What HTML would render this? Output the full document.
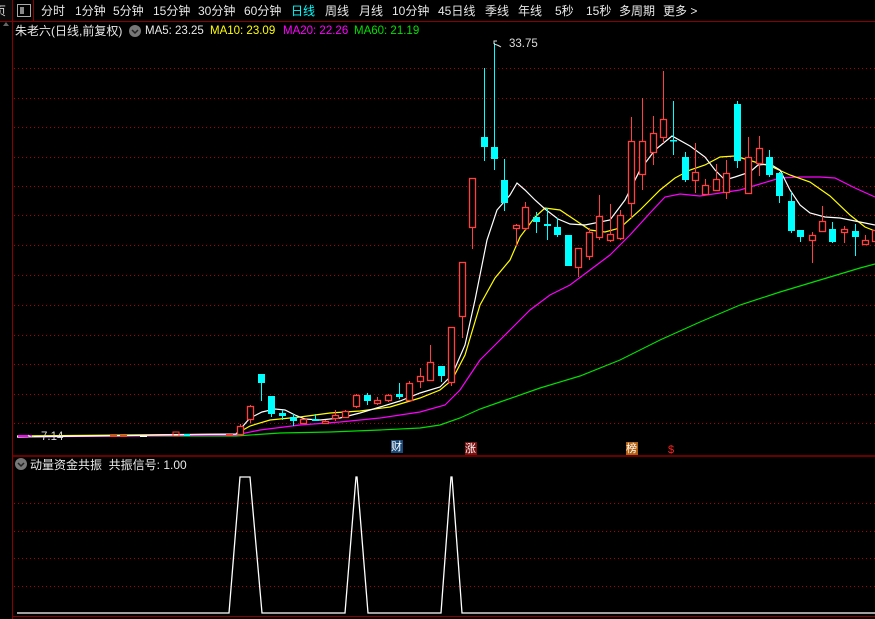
<!DOCTYPE html>
<html><head><meta charset="utf-8"><style>
html,body{margin:0;padding:0;background:#000;width:875px;height:619px;overflow:hidden}
body{position:relative;font-family:"Liberation Sans","Noto Sans CJK SC",sans-serif;font-size:12px;color:#e8e8e8}
.t{position:absolute;white-space:nowrap;line-height:14px}
svg{position:absolute;left:0;top:0}
</style></head><body>
<svg width="875" height="619" viewBox="0 0 875 619">
<rect x="0" y="0" width="12" height="21" fill="#0a0a0a"/>
<line x1="0" y1="21.5" x2="875" y2="21.5" stroke="#8a0000" stroke-width="1"/>
<line x1="12.5" y1="0" x2="12.5" y2="619" stroke="#8a0000" stroke-width="1"/>
<line x1="33.5" y1="0" x2="33.5" y2="21" stroke="#8a0000" stroke-width="1"/>
<line x1="12" y1="456" x2="875" y2="456" stroke="#8a0000" stroke-width="1.5"/>
<line x1="12" y1="616.5" x2="875" y2="616.5" stroke="#8a0000" stroke-width="1"/>
<g stroke="#b00000" stroke-width="1" stroke-dasharray="1,3">
<line x1="14" y1="68.5" x2="875" y2="68.5"/><line x1="14" y1="98.5" x2="875" y2="98.5"/>
<line x1="14" y1="127.5" x2="875" y2="127.5"/><line x1="14" y1="157.5" x2="875" y2="157.5"/>
<line x1="14" y1="186.5" x2="875" y2="186.5"/><line x1="14" y1="215.5" x2="875" y2="215.5"/>
<line x1="14" y1="245.5" x2="875" y2="245.5"/><line x1="14" y1="275.5" x2="875" y2="275.5"/>
<line x1="14" y1="305.5" x2="875" y2="305.5"/><line x1="14" y1="335.5" x2="875" y2="335.5"/>
<line x1="14" y1="364.5" x2="875" y2="364.5"/><line x1="14" y1="394.5" x2="875" y2="394.5"/>
<line x1="14" y1="423.5" x2="875" y2="423.5"/>
<line x1="14" y1="503.5" x2="875" y2="503.5"/><line x1="14" y1="531.5" x2="875" y2="531.5"/>
<line x1="14" y1="558.5" x2="875" y2="558.5"/><line x1="14" y1="586.5" x2="875" y2="586.5"/>
</g>
<polyline fill="none" stroke="#00e000" stroke-width="1.2" points="17,436 236,436 280,433 330,432 380,430 420,428 440,425 460,418 480,409 500,402 540,388 580,376 620,360 660,340 700,322 740,305 780,292 820,280 860,268 875,264"/>
<polyline fill="none" stroke="#ff00ff" stroke-width="1.2" points="17,437 236,435 260,430 300,425 340,422 380,418 420,412 445,405 460,390 470,375 480,360 495,345 510,330 530,310 550,295 570,285 590,270 610,255 630,235 650,213 665,197 680,194 700,196 720,193 740,190 760,184 780,178 800,177 820,177 835,178 855,188 875,197"/>
<polyline fill="none" stroke="#ffff00" stroke-width="1.2" points="17,436 236,434 250,426 270,420 300,417 330,413 360,411 390,407 420,398 440,390 452,380 465,355 480,305 495,278 510,260 520,237 535,217 545,208 560,210 575,220 590,230 605,232 620,228 640,210 660,190 675,178 690,170 705,165 720,157 735,156 755,162 770,166 790,175 810,182 830,196 850,215 865,227 875,231"/>
<polyline fill="none" stroke="#ffffff" stroke-width="1.2" points="17,437 236,434 250,418 262,412 275,409 285,410 295,415 305,419 320,420 340,418 360,413 380,407 400,401 420,393 440,387 452,375 465,345 475,300 487,240 497,210 510,195 517,183 525,190 535,200 545,209 558,219 570,224 585,225 610,220 625,200 640,170 655,150 672,136 690,146 705,157 715,170 725,180 735,177 750,172 758,165 770,164 780,170 790,190 800,205 810,213 825,217 840,218 860,222 875,225"/>
<g id="c"></g>
<g stroke-width="1">
<rect x="18" y="435" width="14" height="2" fill="#ff00ff"/>
<rect x="110" y="435" width="7" height="2" fill="#ff3a3a"/><rect x="120" y="435" width="7" height="2" fill="#ff3a3a"/>
<rect x="140" y="436" width="7" height="1" fill="#fff"/>
<rect x="173" y="432" width="6" height="4" fill="none" stroke="#ff3a3a"/>
<rect x="184" y="434" width="6" height="2" fill="#00ffff"/>
<rect x="226" y="434" width="7" height="2" fill="#ff3a3a"/>
</g>
<path d="M31 437 l-3 -2 M28 437 h6" stroke="#ddd" fill="none"/>
<path d="M494 44 l0 -3 l3 0 M494 44 q4 1 7 3" stroke="#ddd" fill="none"/>
<rect x="391" y="440" width="12" height="13" fill="#1a4a7a"/>
<rect x="465" y="442" width="12" height="13" fill="#7a1010"/>
<rect x="626" y="442" width="12" height="13" fill="#b06010"/>
<polyline fill="none" stroke="#fff" stroke-width="1.3" points="17,613 229,613 240,477 250,477 262,613 345,613 356,477 357,477 368,613 441,613 451,477 452,477 462,613 875,613"/>
<circle cx="21" cy="464" r="6" fill="#777"/><path d="M18 463 l3 3 l3 -3" stroke="#222" stroke-width="1.5" fill="none"/>
<circle cx="135" cy="31" r="6" fill="#777"/><path d="M132 30 l3 3 l3 -3" stroke="#222" stroke-width="1.5" fill="none"/>
<rect x="17.5" y="4.5" width="13" height="12" fill="none" stroke="#aaa"/><rect x="20" y="7" width="4" height="7" fill="#888"/>
<path d="M3 26 l3 -4 l3 4z" fill="#666"/>
</svg>
<div class="t" style="color:#ddd;left:-6px;top:4px">页</div>
<div class="t" style="top:4px;left:41px">分时</div>
<div class="t" style="top:4px;left:75px">1分钟</div>
<div class="t" style="top:4px;left:113px">5分钟</div>
<div class="t" style="top:4px;left:153px">15分钟</div>
<div class="t" style="top:4px;left:198px">30分钟</div>
<div class="t" style="top:4px;left:244px">60分钟</div>
<div class="t" style="top:4px;left:291px;color:#00ffff">日线</div>
<div class="t" style="top:4px;left:325px">周线</div>
<div class="t" style="top:4px;left:359px">月线</div>
<div class="t" style="top:4px;left:392px">10分钟</div>
<div class="t" style="top:4px;left:438px">45日线</div>
<div class="t" style="top:4px;left:485px">季线</div>
<div class="t" style="top:4px;left:518px">年线</div>
<div class="t" style="top:4px;left:555px">5秒</div>
<div class="t" style="top:4px;left:586px">15秒</div>
<div class="t" style="top:4px;left:619px">多周期</div>
<div class="t" style="top:4px;left:663px">更多 &gt;</div>
<div class="t" style="top:24px;left:15px">朱老六(日线,前复权)</div>
<div class="t" style="top:24px;left:145px;font-size:11.5px">MA5: 23.25</div>
<div class="t" style="top:24px;left:210px;font-size:11.5px;color:#ffff00">MA10: 23.09</div>
<div class="t" style="top:24px;left:283px;font-size:11.5px;color:#ff00ff">MA20: 22.26</div>
<div class="t" style="top:24px;left:354px;font-size:11.5px;color:#00e000">MA60: 21.19</div>
<div class="t" style="top:37px;left:509px;font-size:11.5px;color:#ddd">33.75</div>
<div class="t" style="top:430px;left:41px;font-size:11.5px;color:#ddd">7.14</div>
<div class="t" style="top:440px;left:391px;font-size:11px;color:#fff">财</div>
<div class="t" style="top:442px;left:465px;font-size:11px;color:#fff">涨</div>
<div class="t" style="top:442px;left:626px;font-size:11px;color:#fff">榜</div>
<div class="t" style="top:443px;left:668px;font-size:11px;color:#ff2020">$</div>
<div class="t" style="top:458px;left:30px">动量资金共振 &nbsp;共振信号: 1.00</div>
<script>
var C=[
[237,'r',426,434,424,436],[247,'r',406,419,405,423],[258,'c',374,383,374,401],[268,'c',396,414,396,417],
[279,'c',413,416,410,420],[290,'c',417,421,414,426],[300,'r',419,423,419,423],[312,'c',419,421,414,421],
[322,'r',421,423,420,423],[332,'r',415,418,410,421],[342,'r',411,417,410,418],[353,'r',395,406,394,408],
[364,'c',395,401,393,405],[374,'r',400,403,397,405],[385,'r',395,400,394,402],[396,'c',394,397,383,399],
[406,'r',383,400,381,400],[417,'r',376,381,368,388],[427,'r',362,380,345,381],[438,'c',366,376,366,382],
[448,'r',327,382,327,386],[459,'r',262,316,262,338],[469,'r',178,227,178,249],[481,'c',137,147,68,161],
[491,'c',147,159,43,170],[501,'c',180,203,159,211],[513,'r',225,228,224,246],[522,'r',207,228,202,230],
[533,'c',217,222,212,233],[544,'c',224,226,208,240],[554,'c',227,235,218,237],[565,'c',235,266,235,266],
[575,'r',248,267,248,277],[586,'r',232,256,228,260],[596,'r',216,237,195,240],[607,'r',234,240,204,242],
[617,'r',215,238,210,240],[628,'r',141,203,117,218],[639,'r',141,174,98,190],[650,'r',133,152,116,165],
[660,'r',119,137,71,143],[670,'c',140,141,101,155],[682,'c',157,180,152,182],[692,'r',172,180,143,193],
[702,'r',185,194,179,194],[713,'r',179,190,164,190],[723,'r',173,192,160,199],[734,'c',104,161,101,168],
[745,'r',157,193,137,194],[756,'r',148,163,136,176],[766,'c',157,175,150,177],[776,'c',173,196,172,203],
[788,'c',201,231,192,233],[797,'c',230,237,230,242],[809,'r',235,240,232,263],[819,'r',221,231,206,232],
[829,'c',229,242,222,243],[841,'r',229,232,226,243],[852,'c',231,237,224,256],[862,'r',240,244,235,245],
[872,'r',230,241,226,244]];
var s='';
C.forEach(function(a){var x=a[0],w=6,col=a[1]=='r'?'#ff4040':'#00ffff',m=x+3.5;
s+='<line x1="'+m+'" y1="'+a[4]+'" x2="'+m+'" y2="'+a[5]+'" stroke="'+col+'"/>';
if(a[1]=='r'){s+='<rect x="'+(x+.5)+'" y="'+(a[2]+.5)+'" width="'+w+'" height="'+Math.max(1,a[3]-a[2])+'" fill="#000" stroke="'+col+'" stroke-width="1.3"/>';}
else{s+='<rect x="'+x+'" y="'+a[2]+'" width="'+(w+1)+'" height="'+Math.max(1.5,a[3]-a[2])+'" fill="'+col+'"/>';}});
document.getElementById('c').innerHTML=s;
</script>
</body></html>
